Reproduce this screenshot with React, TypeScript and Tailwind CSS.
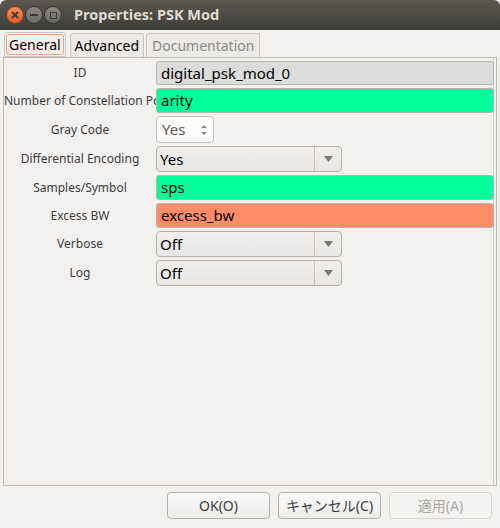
import React from 'react';

function Field({ value, bg }: { value: string; bg: string }) {
  return (
    <div className={`h-[25px] w-[338px] rounded-[3px] border border-[#b8b5b0] ${bg} pl-[4px] text-[15px] leading-[23px] text-black`}>
      {value}
    </div>
  );
}

function Combo({ value }: { value: string }) {
  return (
    <div className="flex h-[26px] w-[186px] rounded-[4px] border border-[#b3b0aa] bg-gradient-to-b from-[#f0efee] to-[#e8e7e6] text-[15px] text-black">
      <div className="flex-1 pl-[3px] leading-[24px]">{value}</div>
      <div className="flex w-[27px] items-center justify-center border-l border-[#c4c1bc]">
        <svg width="9" height="6" viewBox="0 0 9 6">
          <path d="M0 0 L9 0 L4.5 6 Z" fill="#7a7875" />
        </svg>
      </div>
    </div>
  );
}

function Row({ label, children }: { label: string; children: React.ReactNode }) {
  return (
    <div className="flex items-center">
      <div className="w-[152px] overflow-hidden whitespace-nowrap text-center text-[12px] text-[#3c3c3c]">{label}</div>
      <div>{children}</div>
    </div>
  );
}

export default function App() {
  return (
    <div
      className="flex h-[528px] w-[500px] flex-col overflow-hidden bg-[#f2f1f0]"
      style={{ fontFamily: '"Noto Sans", "Noto Sans CJK JP", sans-serif' }}
    >
      {/* Title bar */}
      <div className="flex h-[30px] items-center rounded-t-[6px] bg-gradient-to-b from-[#5b5951] to-[#3d3c37] px-[6px]">
        <div className="flex items-center gap-[1px]">
          <div className="flex h-[18px] w-[18px] items-center justify-center rounded-full border border-[#7a3a20] bg-gradient-to-b from-[#f88c5c] to-[#e05a24]">
            <svg width="8" height="8" viewBox="0 0 8 8">
              <path d="M1 1 L7 7 M7 1 L1 7" stroke="#3c3b37" strokeWidth="1.8" />
            </svg>
          </div>
          <div className="flex h-[18px] w-[18px] items-center justify-center rounded-full border border-[#35342f] bg-gradient-to-b from-[#8c8a84] to-[#6b6964]">
            <div className="h-[2px] w-[8px] bg-[#3c3b37]" />
          </div>
          <div className="flex h-[18px] w-[18px] items-center justify-center rounded-full border border-[#35342f] bg-gradient-to-b from-[#8c8a84] to-[#6b6964]">
            <div className="h-[7px] w-[7px] border-[1.5px] border-[#3c3b37]" />
          </div>
        </div>
        <div className="ml-[12px] text-[14.5px] font-bold text-[#dfdbd2]">Properties: PSK Mod</div>
      </div>

      {/* Tabs */}
      <div className="flex h-[27px] items-end gap-[2px] px-[4px] pt-[2px]">
        <div className="flex h-[25px] items-center rounded-t-[3px] border border-[#c8c5c0] bg-[#f2f1f0] px-[1px]">
          <div className="flex h-[21px] items-center rounded-[3px] border border-[#f0a285] bg-[#fbeee8] px-[2px] text-[14px] text-black">General</div>
        </div>
        <div className="ml-[2px] flex h-[24px] items-center rounded-t-[3px] border border-b-0 border-[#c8c5c0] bg-[#ebeae8] px-[4px] text-[14px] text-black">Advanced</div>
        <div className="flex h-[24px] items-center rounded-t-[3px] border border-b-0 border-[#c8c5c0] bg-[#ebeae8] px-[5px] text-[14px] text-[#8a8884]">Documentation</div>
      </div>

      {/* Panel */}
      <div className="mx-[3px] flex h-[429px] flex-col gap-[3px] border border-[#bdbab5] pr-[2px] pt-[3px] shadow-[inset_-2px_0_0_#f2f1f0,inset_-3px_0_0_#cfccc7]">
        <Row label="ID">
          <div className="h-[24px] w-[338px] rounded-[3px] border border-[#b8b5b0] bg-[#dcdcdc] pl-[4px] text-[15px] leading-[22px] text-black">digital_psk_mod_0</div>
        </Row>
        <Row label="Number of Constellation Points">
          <Field value="arity" bg="bg-[#00ff99]" />
        </Row>
        <Row label="Gray Code">
          <div className="flex h-[27px] w-[58px] items-center justify-between rounded-[4px] border border-[#c4c1bc] bg-[#fbfbfb] pl-[5px] pr-[6px] text-[15px] text-[#5a5855]">
            <span>Yes</span>
            <svg width="6" height="12" viewBox="0 0 6 12">
              <path d="M0 4 L3 1 L6 4 Z M0 8 L3 11 L6 8 Z" fill="#8a8884" />
            </svg>
          </div>
        </Row>
        <Row label="Differential Encoding">
          <Combo value="Yes" />
        </Row>
        <Row label="Samples/Symbol">
          <Field value="sps" bg="bg-[#00ff99]" />
        </Row>
        <Row label="Excess BW">
          <Field value="excess_bw" bg="bg-[#ff8c69]" />
        </Row>
        <Row label="Verbose">
          <Combo value="Off" />
        </Row>
        <Row label="Log">
          <Combo value="Off" />
        </Row>
      </div>

      {/* Buttons */}
      <div className="mt-[6px] flex justify-end gap-[8px] pr-[8px]">
        <div className="flex h-[27px] w-[103px] items-center justify-center rounded-[4px] border border-[#b3b0aa] bg-gradient-to-b from-[#fafafa] to-[#ecebea] text-[14px] text-[#3c3c3c]">OK(O)</div>
        <div className="flex h-[27px] w-[103px] items-center justify-center rounded-[4px] border border-[#b3b0aa] bg-gradient-to-b from-[#fafafa] to-[#ecebea] text-[14px] text-[#3c3c3c]">キャンセル(C)</div>
        <div className="flex h-[27px] w-[103px] items-center justify-center rounded-[4px] border border-[#d8d6d2] bg-[#f4f3f2] text-[14px] text-[#a8a6a2]">適用(A)</div>
      </div>
    </div>
  );
}
